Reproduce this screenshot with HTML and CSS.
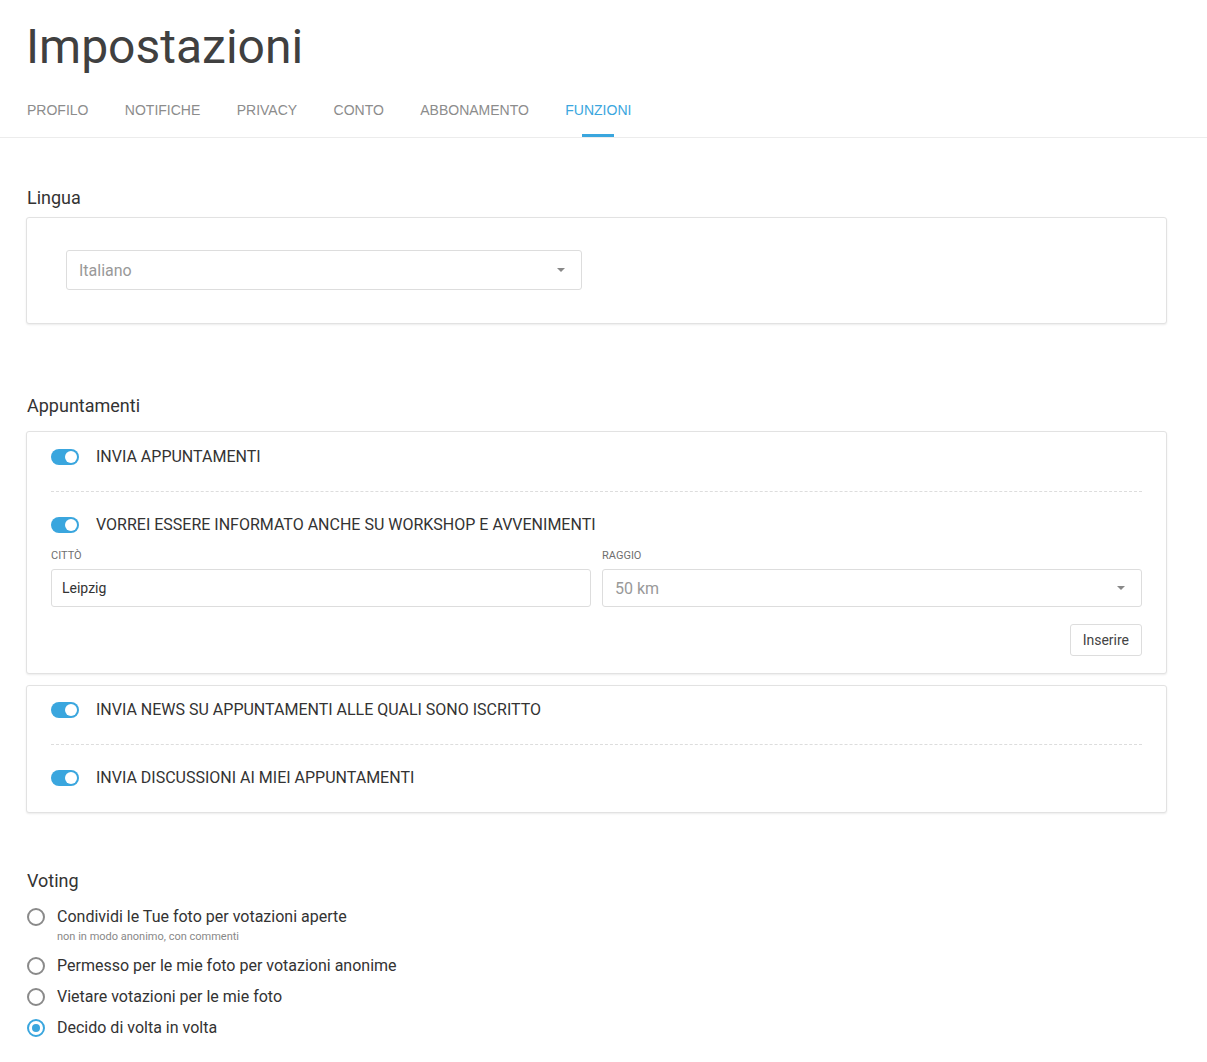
FILE: index.html
```html
<!DOCTYPE html>
<html lang="it">
<head>
<meta charset="utf-8">
<title>Impostazioni</title>
<link rel="stylesheet" href="styles.css">
</head>
<body>
<header class="page-header">
  <h1 class="title">Impostazioni</h1>
  <nav class="tabs">
    <a class="tab">PROFILO<span class="tab-bar"></span></a>
    <a class="tab">NOTIFICHE<span class="tab-bar"></span></a>
    <a class="tab">PRIVACY<span class="tab-bar"></span></a>
    <a class="tab">CONTO<span class="tab-bar"></span></a>
    <a class="tab">ABBONAMENTO<span class="tab-bar"></span></a>
    <a class="tab active">FUNZIONI<span class="tab-bar"></span></a>
  </nav>
</header>

<main class="content">
  <h2 class="section-title lingua-title">Lingua</h2>
  <div class="card card-lingua">
    <div class="select select-lingua">
      <span class="select-value">Italiano</span>
      <span class="caret"></span>
    </div>
  </div>

  <h2 class="section-title app-title">Appuntamenti</h2>
  <div class="card card-list">
    <div class="item">
      <span class="toggle"><span class="knob"></span></span>
      <span class="item-label">INVIA APPUNTAMENTI</span>
    </div>
    <div class="item item-last">
      <span class="toggle"><span class="knob"></span></span>
      <span class="item-label">VORREI ESSERE INFORMATO ANCHE SU WORKSHOP E AVVENIMENTI</span>
    </div>
    <div class="form-grid">
      <div class="field">
        <label class="field-label">CITTÒ</label>
        <div class="input">Leipzig</div>
      </div>
      <div class="field">
        <label class="field-label">RAGGIO</label>
        <div class="select select-small">
          <span class="select-value">50 km</span>
          <span class="caret"></span>
        </div>
      </div>
    </div>
    <div class="actions">
      <button class="btn">Inserire</button>
    </div>
  </div>

  <div class="card card-list card-second">
    <div class="item">
      <span class="toggle"><span class="knob"></span></span>
      <span class="item-label">INVIA NEWS SU APPUNTAMENTI ALLE QUALI SONO ISCRITTO</span>
    </div>
    <div class="item item-last item-pad-bottom">
      <span class="toggle"><span class="knob"></span></span>
      <span class="item-label">INVIA DISCUSSIONI AI MIEI APPUNTAMENTI</span>
    </div>
  </div>

  <h2 class="section-title voting-title">Voting</h2>
  <div class="radios">
    <div class="radio-item">
      <div class="radio-row">
        <span class="radio"></span>
        <span class="radio-label">Condividi le Tue foto per votazioni aperte</span>
      </div>
      <div class="radio-sub">non in modo anonimo, con commenti</div>
    </div>
    <div class="radio-item">
      <div class="radio-row">
        <span class="radio"></span>
        <span class="radio-label">Permesso per le mie foto per votazioni anonime</span>
      </div>
    </div>
    <div class="radio-item">
      <div class="radio-row">
        <span class="radio"></span>
        <span class="radio-label">Vietare votazioni per le mie foto</span>
      </div>
    </div>
    <div class="radio-item">
      <div class="radio-row">
        <span class="radio checked"><span class="dot"></span></span>
        <span class="radio-label">Decido di volta in volta</span>
      </div>
    </div>
  </div>
</main>
</body>
</html>
```

FILE: styles.css
```css
* { box-sizing: border-box; }

html, body {
  margin: 0;
  padding: 0;
  background: #ffffff;
}

body {
  font-family: Roboto, "Noto Sans", Arial, sans-serif;
  color: #333333;
}

.page-header {
  border-bottom: 1px solid #ececec;
}

.title {
  margin: 19px 0 0 26px;
  font-family: Roboto, Arial, sans-serif;
  font-weight: 400;
  font-size: 48px;
  line-height: 56px;
  color: #404040;
}

.tabs {
  display: flex;
  gap: 36.4px;
  padding-left: 27px;
}

.tab {
  display: flex;
  flex-direction: column;
  align-items: center;
  gap: 16px;
  padding-top: 27px;
  font-family: "Liberation Sans", Arial, sans-serif;
  font-size: 14px;
  line-height: 16px;
  color: #8c8c8c;
  text-decoration: none;
}

.tab-bar {
  display: block;
  width: 32px;
  height: 3px;
  background: transparent;
}

.tab.active {
  color: #3aa6de;
}

.tab.active .tab-bar {
  background: #3aa6de;
}

.content {
  padding: 0 40px 40px 26px;
}

.section-title {
  margin: 0;
  padding-left: 1px;
  font-size: 18px;
  font-weight: 400;
  line-height: 24px;
  color: #333333;
}

.lingua-title { margin-top: 48px; margin-bottom: 7px; }
.app-title { margin-top: 70px; margin-bottom: 13px; }
.voting-title { margin-top: 56px; margin-bottom: 14px; }

.card {
  border: 1px solid #e2e2e2;
  border-radius: 3px;
  box-shadow: 0 1px 2px rgba(0, 0, 0, 0.08);
  background: #fff;
}

.card-lingua {
  padding: 32px 39px 33px;
}

.select {
  display: flex;
  align-items: center;
  justify-content: space-between;
  border: 1px solid #dddddd;
  border-radius: 3px;
  background: #fff;
  padding: 0 12px;
}

.select-lingua {
  width: 516px;
  height: 40px;
}

.select-small {
  height: 38px;
}

.select-value {
  font-size: 16px;
  color: #999999;
}

.caret {
  width: 0;
  height: 0;
  border-left: 4px solid transparent;
  border-right: 4px solid transparent;
  border-top: 4px solid #888888;
  margin-right: 4px;
}

.card-list {
  padding: 0 24px 17px 24px;
}

.card-second {
  margin-top: 11px;
  padding-bottom: 0;
}

.item {
  display: flex;
  align-items: center;
  gap: 17px;
  padding: 15px 0 24px;
  border-bottom: 1px dashed #dddddd;
}

.card-second .item:first-child {
  padding-top: 14px;
}

.item-last {
  border-bottom: none;
  padding-top: 23px;
  padding-bottom: 0;
}

.item-pad-bottom {
  padding-bottom: 24px;
}

.item-label {
  font-size: 16px;
  line-height: 20px;
  color: #333333;
}

.toggle {
  display: flex;
  align-items: center;
  justify-content: flex-end;
  width: 28px;
  height: 16px;
  border-radius: 8px;
  background: #3aa6de;
  padding: 2px;
  flex-shrink: 0;
}

.knob {
  width: 12px;
  height: 12px;
  border-radius: 50%;
  background: #ffffff;
}

.form-grid {
  display: grid;
  grid-template-columns: 1fr 1fr;
  column-gap: 11px;
  margin-top: 14px;
}

.field {
  display: flex;
  flex-direction: column;
  gap: 6px;
}

.field-label {
  font-size: 11px;
  line-height: 14px;
  color: #6f6f6f;
}

.input {
  height: 38px;
  border: 1px solid #dddddd;
  border-radius: 3px;
  padding: 0 10px;
  display: flex;
  align-items: center;
  font-size: 14px;
  color: #333333;
}

.actions {
  display: flex;
  justify-content: flex-end;
  margin-top: 17px;
}

.btn {
  height: 32px;
  padding: 0 12px;
  border: 1px solid #dddddd;
  border-radius: 3px;
  background: #ffffff;
  font-family: Roboto, Arial, sans-serif;
  font-size: 14px;
  color: #444444;
}

.radios {
  display: flex;
  flex-direction: column;
  gap: 11px;
}

.radio-item:first-child {
  padding-bottom: 1px;
}

.radio-row {
  display: flex;
  align-items: center;
  gap: 12px;
}

.radio {
  width: 18px;
  height: 18px;
  border: 2px solid #8a8a8a;
  border-radius: 50%;
  display: flex;
  align-items: center;
  justify-content: center;
  margin-left: 1px;
}

.radio.checked {
  border-color: #3aa6de;
}

.dot {
  width: 8px;
  height: 8px;
  border-radius: 50%;
  background: #3aa6de;
}

.radio-label {
  font-size: 16px;
  line-height: 20px;
  color: #333333;
}

.radio-sub {
  margin-top: 3px;
  padding-left: 31px;
  font-size: 11px;
  line-height: 14px;
  color: #888888;
}
```
